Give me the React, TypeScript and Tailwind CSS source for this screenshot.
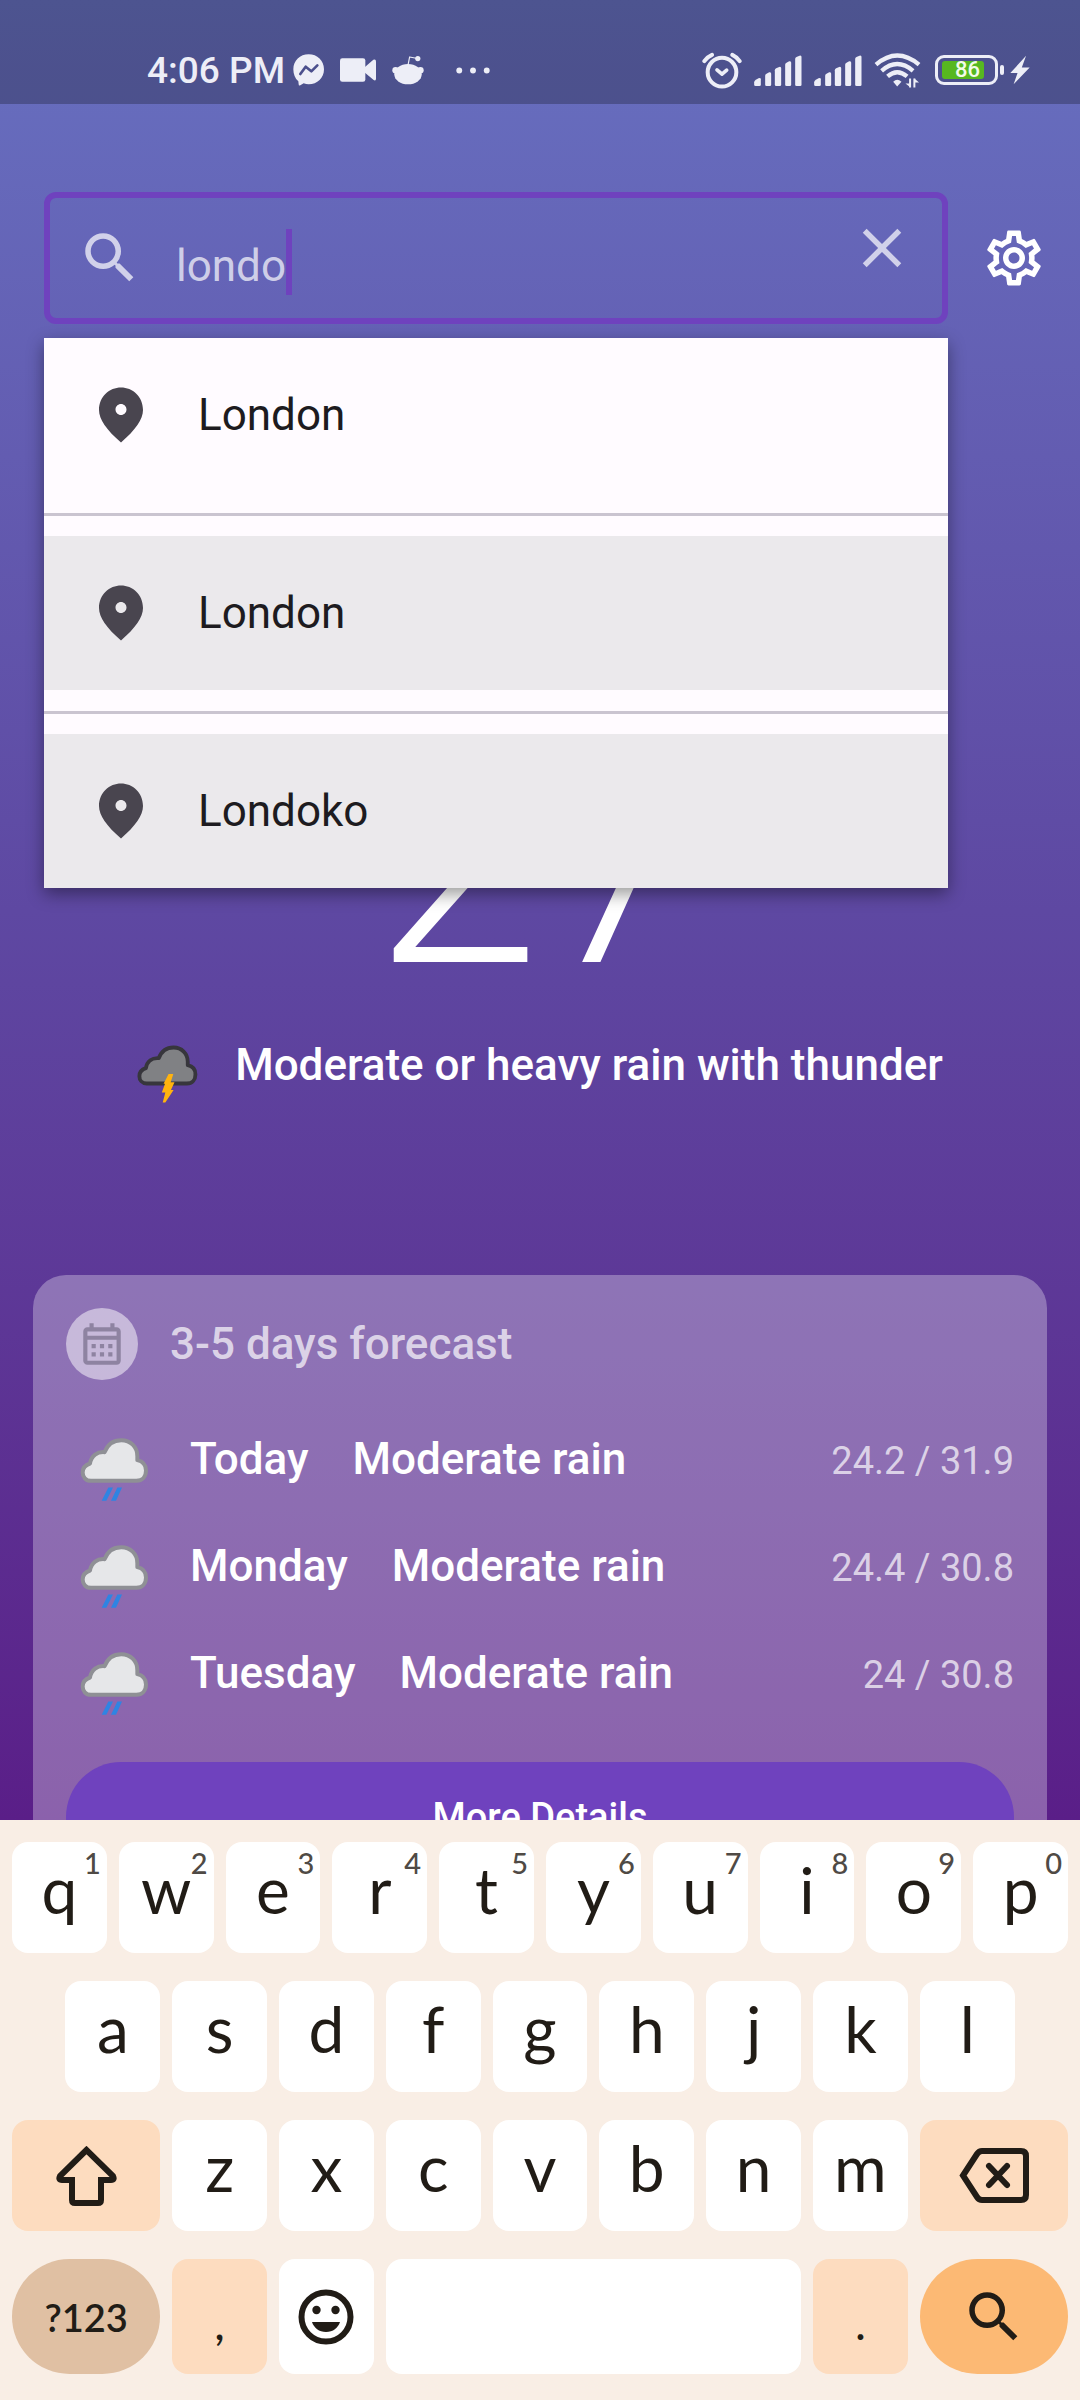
import { useState } from "react";
import type { ReactNode } from "react";
import { MdClose, MdOutlineCalendarMonth, MdOutlineSettings, MdSearch } from "react-icons/md";

const CLOUD =
  "M93 184C77 184 68 172 68 159C68 145 78 136 90 132C94 108 112 96 134 98C142 76 160 62 184 62C211 62 232 82 232 110L232 122C250 126 258 138 258 153C258 171 247 184 229 184Z";

function RainIcon() {
  return (
    <svg viewBox="60 50 210 200" className="mt-5 h-[67px] w-[70px] shrink-0" aria-hidden="true">
      <path d={CLOUD} fill="#e6e7e9" stroke="#8f9095" strokeWidth="12" strokeLinejoin="round" />
      <path d="M145 204H159L139 244H125ZM172 204H186L168 244H153Z" fill="#2f84e2" />
    </svg>
  );
}

function ThunderIcon() {
  return (
    <svg viewBox="60 50 210 200" className="mt-4 h-[59px] w-[62px] shrink-0" aria-hidden="true">
      <path d={CLOUD} fill="#808184" stroke="#37363c" strokeWidth="13" strokeLinejoin="round" />
      <path d="M167 152H183L174 180H187L175 206H184L156 248H147L156 214H144L155 185H150Z" fill="#ffb30f" />
    </svg>
  );
}

function PinIcon() {
  return (
    <svg viewBox="0 0 24 24" className="size-[66px] shrink-0 text-[#49454f]" fill="currentColor" aria-hidden="true">
      <path d="M12 2c-4.2 0-8 3.22-8 8.2 0 3.32 2.67 7.25 8 11.8 5.33-4.55 8-8.48 8-11.8C20 5.22 16.2 2 12 2zm0 10c-1.1 0-2-.9-2-2s.9-2 2-2 2 .9 2 2-.9 2-2 2z" />
    </svg>
  );
}

function SignalIcon() {
  return (
    <svg viewBox="190 45 143 93" className="h-[31px] w-12" fill="currentColor" aria-hidden="true">
      <path d="M190 134V127Q190 122 195 119L203 115Q210 112 210 118V134Q210 138 206 138H194Q190 138 190 134Z" />
      <path d="M223 134V107Q223 103 227 101L235 97Q241 95 241 101V134Q241 138 237 138H227Q223 138 223 134Z" />
      <path d="M252 134V91Q252 87 256 85L265 81Q271 79 271 85V134Q271 138 267 138H256Q252 138 252 134Z" />
      <path d="M283 134V74Q283 70 287 68L295 64Q301 62 301 68V134Q301 138 297 138H287Q283 138 283 134Z" />
      <path d="M313 134V57Q313 53 317 51L326 47Q332 45 332 51V134Q332 138 328 138H317Q313 138 313 134Z" />
    </svg>
  );
}

function StatusBar() {
  return (
    <header className="flex h-26 items-center justify-between bg-black/25 pt-9 pr-[50px] pl-[147px] text-[#edeef7]">
      <div className="flex items-center">
        <span className="text-[37px] leading-none font-medium">4:06 PM</span>
        <svg viewBox="28 44 93 94" className="ml-2 h-8 w-[31px]" aria-hidden="true">
          <path
            d="M75 44C101 44 121 63 121 89C121 115 101 134 75 134C70 134 65 133 60 131L50 137Q45 139 45 134L44 125C34 117 29 104 29 89C29 63 49 44 75 44Z"
            fill="currentColor"
          />
          <path d="M50 103L66 81L83 95L101 77" fill="none" stroke="#4b4f8d" strokeWidth="8" strokeLinecap="round" strokeLinejoin="round" />
        </svg>
        <svg viewBox="171 56 108 71" className="ml-4 h-6 w-9" fill="currentColor" aria-hidden="true">
          <rect x="171" y="56" width="76" height="71" rx="7" />
          <path d="M245 83L271 61Q279 58 279 66V117Q279 126 271 121L245 99Z" />
        </svg>
        <svg viewBox="326 44 98 90" className="ml-4 h-[30px] w-8" fill="currentColor" aria-hidden="true">
          <ellipse cx="375" cy="102" rx="42" ry="31" />
          <circle cx="337" cy="90" r="10" />
          <circle cx="413" cy="90" r="10" />
          <circle cx="405" cy="54" r="8" />
          <path d="M375 74L380 49L400 53" fill="none" stroke="currentColor" strokeWidth="3.5" strokeLinejoin="round" />
        </svg>
        <svg viewBox="515 80 104 20" className="ml-8 h-[7px] w-[34px]" fill="currentColor" aria-hidden="true">
          <circle cx="525" cy="90" r="9" />
          <circle cx="567" cy="90" r="9" />
          <circle cx="609" cy="90" r="9" />
        </svg>
      </div>
      <div className="flex items-center gap-3">
        <svg viewBox="31 34 120 110" className="h-[37px] w-10" fill="none" stroke="currentColor" aria-hidden="true">
          <circle cx="91" cy="94" r="43" strokeWidth="12" />
          <path d="M38 61Q47 48 61 42M144 61Q135 48 122 42" strokeWidth="12" strokeLinecap="round" />
          <path d="M76 87L91 100L105 88" strokeWidth="11" strokeLinecap="round" strokeLinejoin="round" />
        </svg>
        <SignalIcon />
        <SignalIcon />
        <svg viewBox="550 38 142 110" className="h-[37px] w-[47px]" fill="none" stroke="currentColor" strokeWidth="13" aria-hidden="true">
          <path d="M556 75Q620 20 686 75" />
          <path d="M573 94Q620 53 668 94" />
          <path d="M591 111Q620 86 650 111" />
          <path d="M608 127Q620 115 633 127L620 141Z" fill="currentColor" stroke="none" />
          <path d="M659 117V144M672 117V144" strokeWidth="6" />
          <path d="M645 132H659V143ZM686 129H672V117Z" fill="currentColor" stroke="none" />
        </svg>
        <div className="ml-0.5 flex items-center gap-0.5">
          <div className="flex h-[30px] w-[63px] items-center rounded-[9px] border-3 border-current px-1">
            <div className="flex h-[18px] w-[42px] items-center justify-end rounded-[3px] bg-[#57b820] pr-1">
              <span className="text-[22px] leading-none font-medium text-[#f3fbe9]">86</span>
            </div>
          </div>
          <div className="h-2.5 w-1 rounded-sm bg-current" />
          <svg viewBox="961 45 61 89" className="ml-1 h-[30px] w-5" fill="currentColor" aria-hidden="true">
            <path d="M1010 46L962 99H984L972 133L1021 82H997Z" />
          </svg>
        </div>
      </div>
    </header>
  );
}

function Suggestion({ name, shaded }: { name: string; shaded: boolean }) {
  return (
    <button
      type="button"
      className={
        shaded
          ? "flex h-[154px] w-full items-center gap-11 bg-[#ebe9ec] px-11 text-left"
          : "flex h-[154px] w-full items-center gap-11 px-11 text-left"
      }
    >
      <PinIcon />
      <span className="text-[44px] leading-[64px] text-[#1d1b20]">{name}</span>
    </button>
  );
}

const suggestions = ["London", "London", "Londoko"];

function Search() {
  const [query, setQuery] = useState("londo");
  return (
    <div className="mt-22 flex items-center gap-[33px] pr-[33px] pl-11">
      <div className="relative min-w-0 flex-1">
        <div className="flex h-33 items-center rounded-xl border-6 border-[#6f42be] px-[27px] text-white/70">
          <MdSearch className="size-[66px] shrink-0" aria-hidden="true" />
          <div className="ml-[33px] flex min-w-0 flex-1 items-center pt-2">
            <input
              type="text"
              aria-label="Search location"
              value={query}
              onChange={(e) => setQuery(e.target.value)}
              className="min-w-0 bg-transparent pt-2 text-[44px] leading-[58px] outline-none [field-sizing:content]"
            />
            <span className="h-[66px] w-1.5 bg-[#6f42be]" />
          </div>
          <button type="button" aria-label="Clear search" className="pb-5" onClick={() => setQuery("")}>
            <MdClose className="size-[66px]" />
          </button>
        </div>
        <ul className="absolute inset-x-0 top-full z-10 mt-3.5 bg-[#fffbff] shadow-[0_6px_16px_rgba(0,0,0,0.4)]">
          {suggestions.map((name, i) => (
            <li key={i}>
              {i > 0 && (
                <div className="flex h-11 items-center">
                  <hr className="w-full border-t-3 border-[#cac4d0]" />
                </div>
              )}
              <Suggestion name={name} shaded={i > 0} />
            </li>
          ))}
        </ul>
      </div>
      <button type="button" aria-label="Settings" className="text-white">
        <MdOutlineSettings className="size-[66px]" />
      </button>
    </div>
  );
}

const forecast = [
  { day: "Today", text: "Moderate rain", range: "24.2 / 31.9" },
  { day: "Monday", text: "Moderate rain", range: "24.4 / 30.8" },
  { day: "Tuesday", text: "Moderate rain", range: "24 / 30.8" },
];

function ForecastCard() {
  return (
    <section className="mx-[33px] mt-[180px] rounded-[33px] bg-white/30 p-[33px]">
      <div className="flex items-center gap-8">
        <span className="flex size-18 items-center justify-center rounded-full bg-white/50 text-[#8e83a1]">
          <MdOutlineCalendarMonth className="size-[50px]" aria-hidden="true" />
        </span>
        <h2 className="text-[44px] leading-[64px] font-medium text-white/70">3-5 days forecast</h2>
      </div>
      <ul className="mt-[26px]">
        {forecast.map((f) => (
          <li key={f.day} className="flex h-[107px] items-center pl-3.5">
            <RainIcon />
            <div className="ml-10 flex flex-1 items-baseline gap-11 text-[44px] leading-[64px] font-medium text-white">
              <span>{f.day}</span>
              <span>{f.text}</span>
              <span className="ml-auto text-[38px] font-normal text-white/70">{f.range}</span>
            </div>
          </li>
        ))}
      </ul>
      <button
        type="button"
        className="mt-[35px] flex h-[110px] w-full items-center justify-center rounded-full bg-[#6f42be] text-[38px] font-medium text-white"
      >
        More Details
      </button>
    </section>
  );
}

function Key({ children, hint, className = "bg-white" }: { children: ReactNode; hint?: string; className?: string }) {
  return (
    <button
      type="button"
      className={`relative col-span-2 flex h-[111px] items-center justify-center rounded-2xl pb-4 text-[64px] leading-none ${className}`}
    >
      {children}
      {hint && <span className="absolute top-1.5 right-1.5 text-[29px] leading-none font-medium text-[#4f4a45]">{hint}</span>}
    </button>
  );
}

const rowOne = ["q", "w", "e", "r", "t", "y", "u", "i", "o", "p"];
const rowTwo = ["a", "s", "d", "f", "g", "h", "j", "k", "l"];
const rowThree = ["z", "x", "c", "v", "b", "n", "m"];

function Keyboard() {
  return (
    <div className="flex flex-col gap-7 bg-[#f9eee5] px-3 pt-[22px] pb-[26px] font-[Lato,sans-serif] text-[#211c16]">
      <div className="grid grid-cols-20 gap-x-3">
        {rowOne.map((k, i) => (
          <Key key={k} hint={String((i + 1) % 10)}>
            {k}
          </Key>
        ))}
      </div>
      <div className="grid grid-cols-20 gap-x-3">
        {rowTwo.map((k, i) => (
          <Key key={k} className={i === 0 ? "col-start-2 bg-white" : "bg-white"}>
            {k}
          </Key>
        ))}
      </div>
      <div className="grid grid-cols-20 gap-x-3">
        <button type="button" aria-label="Shift" className="col-span-3 flex items-center justify-center rounded-2xl bg-[#fddcbf]">
          <svg viewBox="0 0 61 60" className="h-[60px] w-[61px]" fill="none" stroke="currentColor" strokeWidth="6" aria-hidden="true">
            <path d="M30.5 4L4 30Q2 34 6 34H16V54Q16 57 19 57H42Q45 57 45 54V34H55Q59 34 57 30Z" />
          </svg>
        </button>
        {rowThree.map((k) => (
          <Key key={k}>{k}</Key>
        ))}
        <button type="button" aria-label="Backspace" className="col-span-3 flex items-center justify-center rounded-2xl bg-[#fddcbf]">
          <svg viewBox="0 0 70 55" className="h-[55px] w-[70px]" fill="none" stroke="currentColor" strokeWidth="6" aria-hidden="true">
            <path d="M4 27.5L18 6Q20 3 23 3H62Q67 3 67 8V47Q67 52 62 52H23Q20 52 18 49Z" />
            <path d="M30 18L48 37M48 18L30 37" strokeLinecap="round" />
          </svg>
        </button>
      </div>
      <div className="grid h-[115px] grid-cols-20 gap-x-3">
        <button type="button" className="col-span-3 rounded-full bg-[#e0c0a3] text-[38px] leading-none font-semibold">
          ?123
        </button>
        <button type="button" className="col-span-2 rounded-2xl bg-[#fddcbf] pt-3 text-[44px] leading-none font-medium">
          ,
        </button>
        <button type="button" aria-label="Emoji" className="col-span-2 flex items-center justify-center rounded-2xl bg-white">
          <svg viewBox="0 0 56 56" className="size-14" fill="currentColor" aria-hidden="true">
            <circle cx="28" cy="28" r="24.5" fill="none" stroke="currentColor" strokeWidth="6" />
            <circle cx="18.5" cy="21" r="4.2" />
            <circle cx="37.5" cy="21" r="4.2" />
            <path d="M14 33H42C40 39 35 43 28 43C21 43 16 39 14 33Z" />
          </svg>
        </button>
        <button type="button" aria-label="Space" className="col-span-8 rounded-2xl bg-white" />
        <button type="button" className="col-span-2 rounded-2xl bg-[#fddcbf] pt-3 text-[44px] leading-none font-medium">
          .
        </button>
        <button type="button" aria-label="Search" className="col-span-3 flex items-center justify-center rounded-full bg-[#fcb974]">
          <MdSearch className="size-[66px]" />
        </button>
      </div>
    </div>
  );
}

export default function App() {
  return (
    <div className="flex h-screen flex-col font-[Roboto,sans-serif]">
      <main className="min-h-0 flex-1 overflow-hidden bg-linear-to-b from-[#6770c0] via-[#5e48a2] to-[#5a1e88]">
        <StatusBar />
        <Search />
        <p className="mt-[386px] text-center text-[300px] leading-[300px] font-light text-white">27</p>
        <div className="mt-[25px] flex h-[60px] items-center justify-center gap-9">
          <ThunderIcon />
          <p className="text-[44px] leading-[60px] font-medium text-white">Moderate or heavy rain with thunder</p>
        </div>
        <ForecastCard />
      </main>
      <Keyboard />
    </div>
  );
}
